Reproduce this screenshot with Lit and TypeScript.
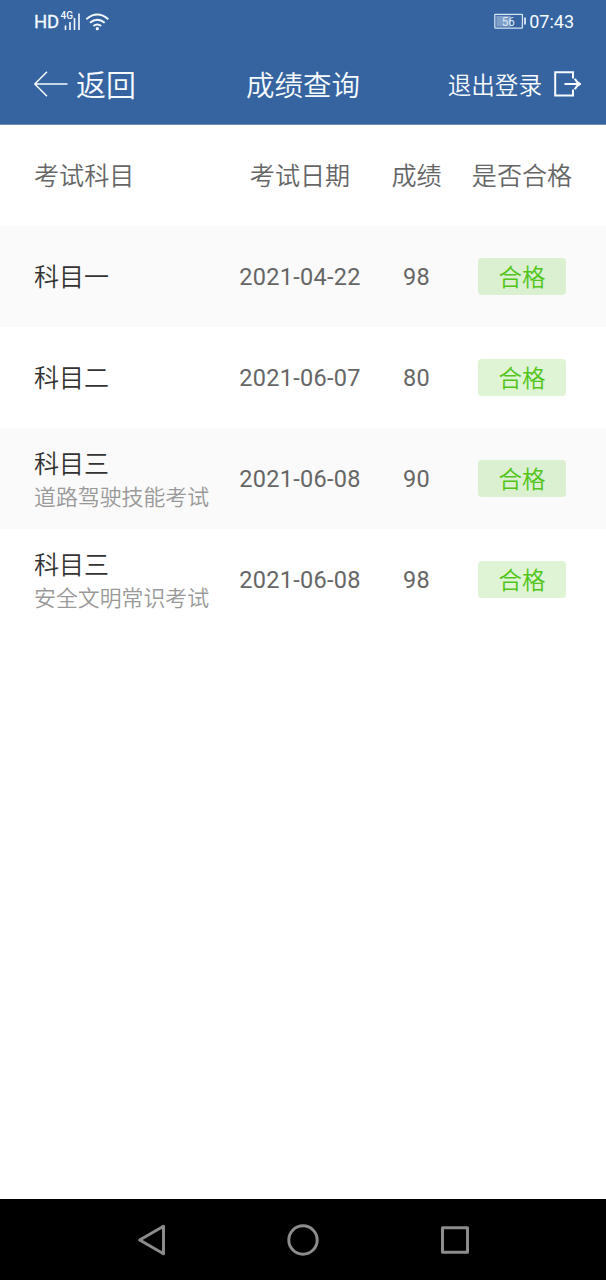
import { LitElement, html, css, nothing } from "lit";
import { customElement, property } from "lit/decorators.js";

interface Exam {
  subject: string;
  detail?: string;
  date: string;
  score: number;
}

const EXAMS: Exam[] = [
  { subject: "科目一", date: "2021-04-22", score: 98 },
  { subject: "科目二", date: "2021-06-07", score: 80 },
  { subject: "科目三", detail: "道路驾驶技能考试", date: "2021-06-08", score: 90 },
  { subject: "科目三", detail: "安全文明常识考试", date: "2021-06-08", score: 98 },
];

@customElement("status-bar")
export class StatusBar extends LitElement {
  static styles = css`
    :host {
      display: flex;
      justify-content: space-between;
      align-items: center;
      height: 44px;
      padding: 0 32px 0 34px;
      color: #f4faff;
      font-family: Roboto, "Noto Sans CJK SC", sans-serif;
    }
    .side { display: flex; align-items: center; }
    .hd { font-size: 18.5px; line-height: 45px; width: 26px; letter-spacing: -0.3px; -webkit-text-stroke: 0.3px; }
    .time { font-size: 18px; line-height: 42px; letter-spacing: 0; margin-left: 3px; }
    svg { display: block; }
    .fg { font: 500 11px Roboto, sans-serif; fill: #f4faff; }
    .pct { font: 12px Roboto, sans-serif; fill: #dce8f5; }
  `;
  render() {
    return html`
      <div class="side">
        <span class="hd">HD</span>
        <svg width="50" height="44" viewBox="60 0 50 44">
          <text class="fg" x="60.5" y="19.4" textLength="12.5" lengthAdjust="spacingAndGlyphs">4G</text>
          <path d="M65.5 25.5v4.5M70 22v8M74.5 18v12M79 13.5v16.5" stroke="#f4faff" stroke-width="1.6" />
          <g fill="none" stroke="#f4faff" stroke-width="1.9">
            <path d="M86.3 19.2Q97.3 9.8 108.3 19.2" />
            <path d="M89.9 22.7Q97.3 16.6 104.7 22.7" />
            <path d="M93.4 26Q97.3 22.9 101.2 26" />
          </g>
          <circle cx="97.3" cy="28.7" r="1.6" fill="#f4faff" />
        </svg>
      </div>
      <div class="side">
        <svg width="33" height="44" viewBox="493 0 33 44">
          <rect x="494.8" y="14.3" width="27.6" height="13.8" rx="0.5" fill="none" stroke="#d4e4f4" stroke-width="1.3" />
          <rect x="496.3" y="15.8" width="14.5" height="10.8" fill="#7f9fc8" />
          <path d="M525 17.5v7" stroke="#f4faff" stroke-width="1.6" />
          <text class="pct" x="501.8" y="25.9" textLength="13" lengthAdjust="spacingAndGlyphs">56</text>
        </svg>
        <span class="time">07:43</span>
      </div>
    `;
  }
}

@customElement("nav-header")
export class NavHeader extends LitElement {
  static styles = css`
    :host {
      display: grid;
      grid-template-columns: 1fr auto 1fr;
      align-items: center;
      height: 80px;
      padding: 0 25px 0 34px;
      color: #f7fbff;
      font-family: "Noto Sans CJK SC", sans-serif;
      font-weight: 350;
      border-bottom: 1px solid #7390b4;
    }
    .back { display: flex; align-items: center; gap: 8px; font-size: 30px; line-height: 78px; }
    .back span { padding-bottom: 2px; }
    .title { font-size: 28.5px; line-height: 80px; margin: 0 4.5px 0 -4.5px; }
    .logout { display: flex; align-items: center; justify-content: flex-end; gap: 12px; font-size: 23.6px; line-height: 80px; }
    svg { display: block; fill: none; stroke: currentColor; }
  `;
  render() {
    return html`
      <div class="back">
        <svg width="34" height="26" viewBox="0 0 34 26" stroke-width="1.5">
          <path d="M33.5 13H.8M13 .8L.8 13L13 25.2" />
        </svg>
        <span>返回</span>
      </div>
      <div class="title">成绩查询</div>
      <div class="logout">
        <span>退出登录</span>
        <svg width="27" height="26" viewBox="0 0 27 26" stroke-width="2">
          <path d="M19 7.5V1.3H1.2V24.4H19V18.4M10.5 13H25.5M20.8 7.8Q22.8 11.8 26 13Q22.8 14.2 20.8 18.2" />
        </svg>
      </div>
    `;
  }
}

@customElement("exam-table")
export class ExamTable extends LitElement {
  @property({ attribute: false }) exams: Exam[] = [];

  static styles = css`
    :host {
      display: block;
      color: #666;
      font-family: Roboto, "Noto Sans CJK SC", sans-serif;
      background: #fff;
    }
    .row {
      display: grid;
      grid-template-columns: 191px 150px 83px 128px;
      align-items: center;
      justify-items: center;
      box-sizing: border-box;
      height: 101px;
      padding-left: 34px;
      padding-right: 20px;
    }
    .row:nth-child(even) { background: #fafafa; }
    .head { font-family: "Noto Sans CJK SC", sans-serif; font-weight: 350; font-size: 25.1px; padding-bottom: 3px; }
    .subject { justify-self: start; font-family: "Noto Sans CJK SC", sans-serif; font-weight: 350; padding-bottom: 3px; }
    .head .subject { padding-bottom: 0; }
    .subject.double { padding-bottom: 1px; }
    .name { color: #333; font-size: 25px; line-height: 34px; }
    .detail { color: #999; font-size: 21.9px; line-height: 33px; white-space: nowrap; }
    .num { font-size: 23.5px; letter-spacing: 0.3px; padding-top: 1px; }
    .tag {
      width: 88px;
      height: 37px;
      border-radius: 4px;
      background: rgba(82, 196, 26, 0.19);
      color: #52c41a;
      font-family: "Noto Sans CJK SC", sans-serif;
      font-weight: 350;
      font-size: 23.5px;
      line-height: 36px;
      text-align: center;
    }
  `;
  render() {
    return html`
      <div class="row head">
        <span class="subject">考试科目</span>
        <span>考试日期</span>
        <span>成绩</span>
        <span>是否合格</span>
      </div>
      ${this.exams.map(
        (e) => html`
          <div class="row">
            <div class="subject ${e.detail ? "double" : ""}">
              <div class="name">${e.subject}</div>
              ${e.detail ? html`<div class="detail">${e.detail}</div>` : nothing}
            </div>
            <span class="num">${e.date}</span>
            <span class="num">${e.score}</span>
            <span class="tag">合格</span>
          </div>
        `
      )}
    `;
  }
}

@customElement("system-nav")
export class SystemNav extends LitElement {
  static styles = css`
    :host {
      display: flex;
      justify-content: space-between;
      align-items: center;
      height: 81px;
      padding: 0 135px;
      background: #000;
    }
    svg { display: block; fill: none; stroke: #8c8c8c; stroke-width: 3; stroke-linejoin: round; }
  `;
  render() {
    return html`
      <svg width="34" height="34" viewBox="0 0 34 34"><path d="M28.5 3.2V30.8L4.7 17Z" /></svg>
      <svg width="34" height="34" viewBox="0 0 34 34"><circle cx="17" cy="17" r="14.2" /></svg>
      <svg width="34" height="34" viewBox="0 0 34 34"><rect x="5.5" y="4.7" width="25" height="24.5" /></svg>
    `;
  }
}

@customElement("app-root")
export class AppRoot extends LitElement {
  static styles = css`
    :host {
      display: flex;
      flex-direction: column;
      width: 606px;
      height: 1280px;
      background: #fff;
      overflow: hidden;
    }
    .top { background: #3564a0; }
    .content { flex: 1; }
  `;
  render() {
    return html`
      <div class="top">
        <status-bar></status-bar>
        <nav-header></nav-header>
      </div>
      <exam-table class="content" .exams=${EXAMS}></exam-table>
      <system-nav></system-nav>
    `;
  }
}
